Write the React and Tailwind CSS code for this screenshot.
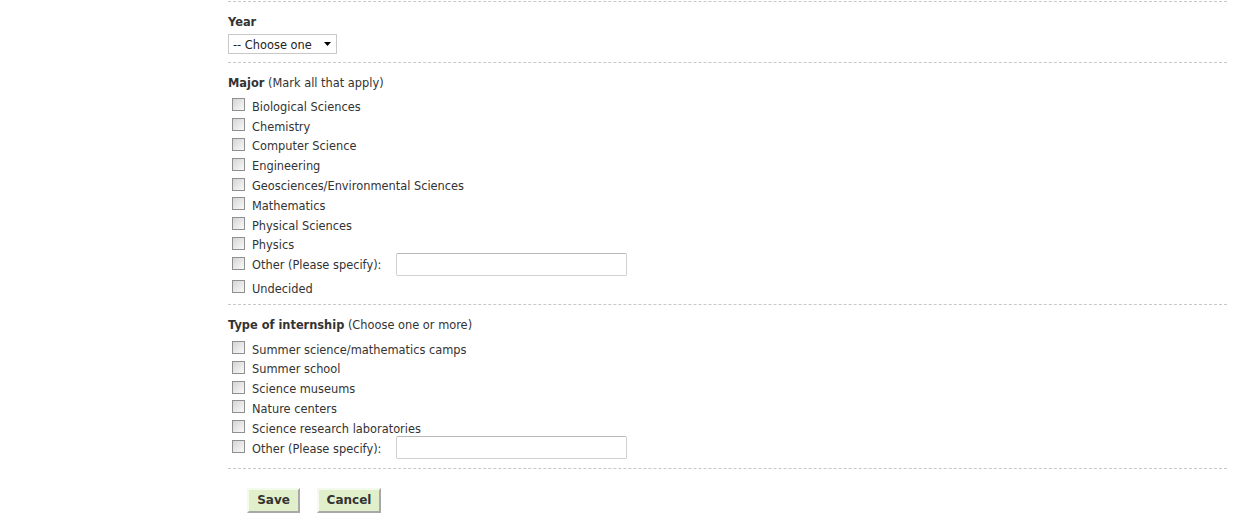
import React from "react";

const majors = [
  "Biological Sciences",
  "Chemistry",
  "Computer Science",
  "Engineering",
  "Geosciences/Environmental Sciences",
  "Mathematics",
  "Physical Sciences",
  "Physics",
];

const internships = [
  "Summer science/mathematics camps",
  "Summer school",
  "Science museums",
  "Nature centers",
  "Science research laboratories",
];

const Box = () => (
  <span className="inline-block w-[13px] h-[13px] -mt-[2px] border border-[#8f8f8f] bg-gradient-to-br from-[#d4d4d4] to-[#fafafa] shrink-0" />
);

const Row = ({ label }) => (
  <div className="flex items-center h-[19.8px] pl-[4px]">
    <Box />
    <span className="ml-[7px] mt-[2px] leading-[14px]">{label}</span>
  </div>
);

const OtherRow = () => (
  <div className="flex items-center h-[20px] pl-[4px]">
    <Box />
    <span className="ml-[7px] mt-[2px] w-[144px] leading-[14px]">Other (Please specify):</span>
    <input
      type="text"
      className="w-[231px] h-[23px] shrink-0 border border-[#d0d0d0] border-t-[#b8b8b8] rounded-[2px] bg-white outline-none"
    />
  </div>
);

const App = () => {
  return (
    <div
      className="w-[1241px] h-[532px] bg-white text-[#333] text-[11.4px] pt-px"
      style={{ fontFamily: "Verdana, 'DejaVu Sans', sans-serif" }}
    >
      <div className="ml-[228px] w-[999px]">
        {/* YEAR */}
        <div className="border-t border-dashed border-[#c8c8c8] pt-[13px] pb-[8px]">
          <div className="font-bold leading-[14px]">Year</div>
          <div className="mt-[5px] w-[109px] h-[20px] border border-[#c8c8c8] flex items-center justify-between pl-[4px] pr-[5px] bg-white">
            <span className="text-[#222] leading-[14px] mt-px">-- Choose one</span>
            <svg width="7" height="4" viewBox="0 0 7 4">
              <path d="M0 0 L7 0 L3.5 4 Z" fill="#000" />
            </svg>
          </div>
        </div>

        {/* MAJOR */}
        <div className="border-t border-dashed border-[#c8c8c8] pt-[13px] pb-[6px]">
          <div className="leading-[14px] mb-[6px]">
            <span className="font-bold">Major</span> (Mark all that apply)
          </div>
          {majors.map((m) => (
            <Row key={m} label={m} />
          ))}
          <OtherRow />
          <div className="h-[3.5px]" />
          <Row label="Undecided" />
        </div>

        {/* TYPE OF INTERNSHIP */}
        <div className="border-t border-dashed border-[#c8c8c8] pt-[13px] pb-[10px]">
          <div className="leading-[14px] mb-[7px]">
            <span className="font-bold">Type of internship</span> (Choose one or more)
          </div>
          {internships.map((m) => (
            <Row key={m} label={m} />
          ))}
          <OtherRow />
        </div>

        {/* BUTTONS */}
        <div className="border-t border-dashed border-[#c8c8c8] pt-[19px] pl-[19px] flex gap-[17px]">
          <button className="w-[53px] h-[25px] bg-[#e1f0cb] border-2 border-t-[#f4faec] border-l-[#f4faec] border-r-[#a8a8a8] border-b-[#a8a8a8] font-bold text-[12px] text-[#333]">
            Save
          </button>
          <button className="w-[64px] h-[25px] bg-[#e1f0cb] border-2 border-t-[#f4faec] border-l-[#f4faec] border-r-[#a8a8a8] border-b-[#a8a8a8] font-bold text-[12px] text-[#333]">
            Cancel
          </button>
        </div>
      </div>
    </div>
  );
};

export default App;
